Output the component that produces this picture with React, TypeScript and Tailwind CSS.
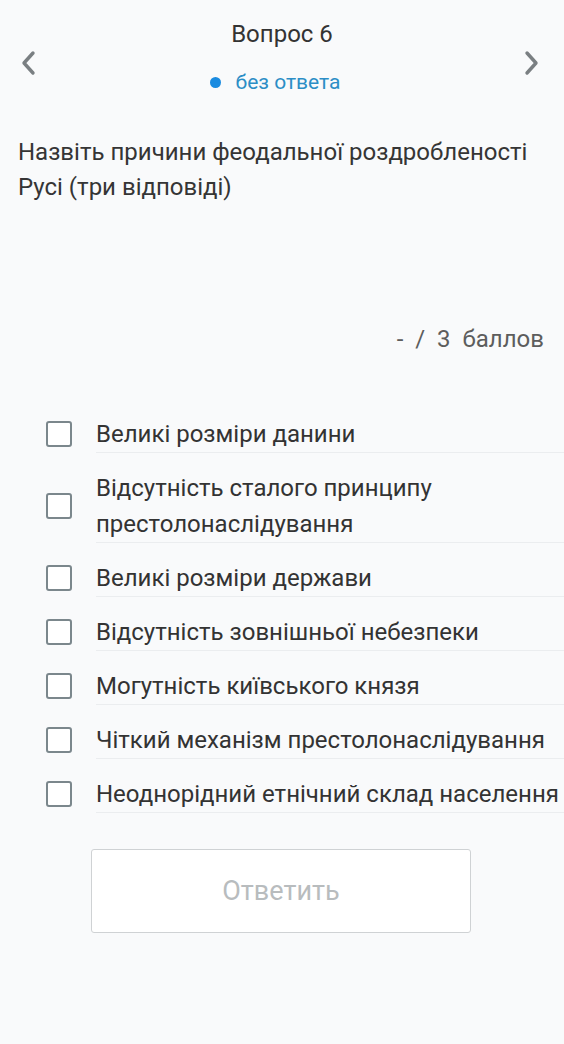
import React from "react";

const options = [
  "Великі розміри данини",
  "Відсутність сталого принципу престолонаслідування",
  "Великі розміри держави",
  "Відсутність зовнішньої небезпеки",
  "Могутність київського князя",
  "Чіткий механізм престолонаслідування",
  "Неоднорідний етнічний склад населення",
];

function Chevron({ dir }: { dir: "left" | "right" }) {
  return (
    <svg width="20" height="26" viewBox="0 0 20 26" fill="none">
      <path
        d={dir === "left" ? "M14 3 L5 13 L14 23" : "M6 3 L15 13 L6 23"}
        stroke="#7a7f82"
        strokeWidth="3.4"
        strokeLinecap="round"
        strokeLinejoin="round"
      />
    </svg>
  );
}

export default function App() {
  return (
    <div
      className="min-h-[1044px] w-[564px] bg-[#f9fafb] text-[#333]"
      style={{ fontFamily: "Roboto, 'Noto Sans', sans-serif" }}
    >
      {/* header */}
      <div className="flex items-start pt-[20px]">
        <div className="w-[60px] flex justify-center pt-[30px] pr-[2px]">
          <Chevron dir="left" />
        </div>
        <div className="flex-1 flex flex-col items-center">
          <div className="text-[24px] leading-[28px] text-[#333]">Вопрос 6</div>
          <div className="mt-[21px] pr-[14px] flex items-center gap-[15px] leading-[26px]">
            <span className="w-[11px] h-[11px] rounded-full bg-[#1a8be0]" />
            <span className="text-[21px] text-[#2c8ec6]">без ответа</span>
          </div>
        </div>
        <div className="w-[60px] flex justify-center pt-[30px] pr-[6px]">
          <Chevron dir="right" />
        </div>
      </div>

      {/* question */}
      <div className="mt-[40px] px-[18px] text-[24px] leading-[35px] text-[#353535]">
        Назвіть причини феодальної роздробленості Русі (три відповіді)
      </div>

      <div className="mt-[119px] pr-[20px] text-right text-[24px] leading-[30px] text-[#5d5d5d] whitespace-pre">
        {"-  /  3  баллов"}
      </div>

      {/* options */}
      <div className="mt-[45px] flex flex-col">
        {options.map((o) => (
          <div key={o} className="flex items-stretch">
            <div className="w-[96px] flex items-center pl-[46px] pt-[17px] pb-[1px]">
              <span className="w-[26px] h-[26px] rounded-[3px] border-[2.5px] border-[#7b878c] bg-white" />
            </div>
            <div className="flex-1 border-b border-[#ebedef] pt-[17px] text-[24px] leading-[36px] text-[#333] whitespace-nowrap overflow-hidden">
              {o === options[1] ? (
                <>
                  Відсутність сталого принципу
                  <br />
                  престолонаслідування
                </>
              ) : (
                o
              )}
            </div>
          </div>
        ))}
      </div>

      {/* submit */}
      <div className="mt-[36px] pl-[91px]">
        <button className="w-[380px] h-[84px] rounded-[3px] border border-[#cfd2d4] bg-white text-[27px] text-[#b8bcbe]">
          Ответить
        </button>
      </div>
    </div>
  );
}
